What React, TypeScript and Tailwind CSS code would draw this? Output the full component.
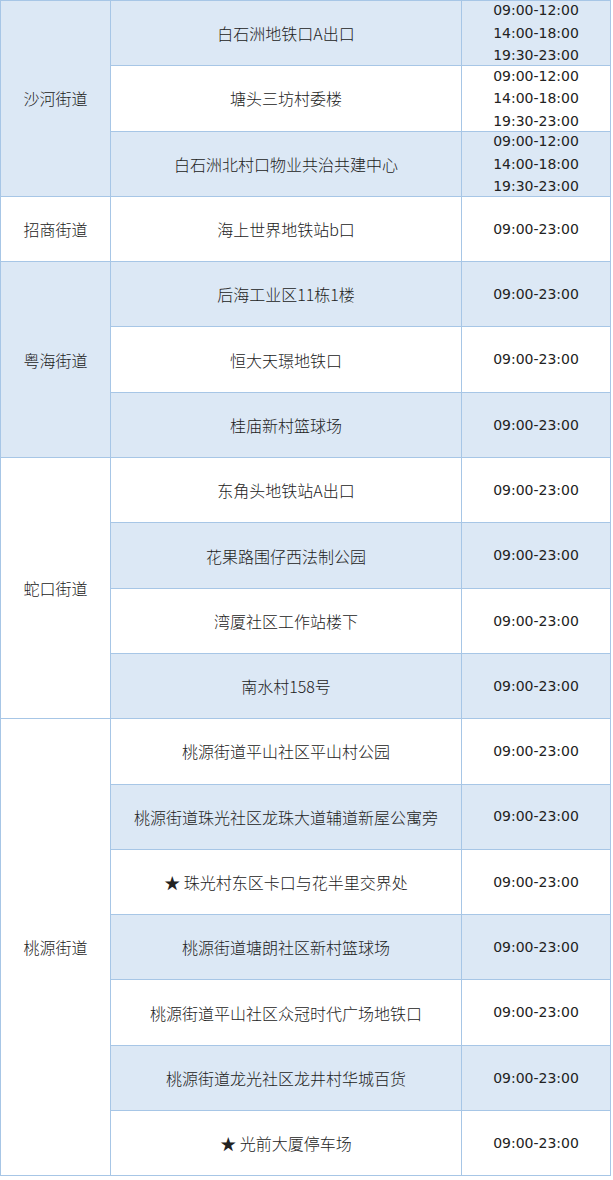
import React from "react";

type Row = { loc: string; time: string[] };
type Section = { name: string; rows: Row[] };

const single = ["09:00-23:00"];
const triple = ["09:00-12:00", "14:00-18:00", "19:30-23:00"];

const sections: Section[] = [
  {
    name: "沙河街道",
    rows: [
      { loc: "白石洲地铁口A出口", time: triple },
      { loc: "塘头三坊村委楼", time: triple },
      { loc: "白石洲北村口物业共治共建中心", time: triple },
    ],
  },
  { name: "招商街道", rows: [{ loc: "海上世界地铁站b口", time: single }] },
  {
    name: "粤海街道",
    rows: [
      { loc: "后海工业区11栋1楼", time: single },
      { loc: "恒大天璟地铁口", time: single },
      { loc: "桂庙新村篮球场", time: single },
    ],
  },
  {
    name: "蛇口街道",
    rows: [
      { loc: "东角头地铁站A出口", time: single },
      { loc: "花果路围仔西法制公园", time: single },
      { loc: "湾厦社区工作站楼下", time: single },
      { loc: "南水村158号", time: single },
    ],
  },
  {
    name: "桃源街道",
    rows: [
      { loc: "桃源街道平山社区平山村公园", time: single },
      { loc: "桃源街道珠光社区龙珠大道辅道新屋公寓旁", time: single },
      { loc: "★ 珠光村东区卡口与花半里交界处", time: single },
      { loc: "桃源街道塘朗社区新村篮球场", time: single },
      { loc: "桃源街道平山社区众冠时代广场地铁口", time: single },
      { loc: "桃源街道龙光社区龙井村华城百货", time: single },
      { loc: "★ 光前大厦停车场", time: single },
    ],
  },
];

export default function App() {
  let idx = 0;
  return (
    <div className="w-[613px] h-[1180px] bg-white">
      <div
        className="w-[611px] border border-[#a7c6e6] text-[#222]"
        style={{ fontFamily: '"Noto Sans CJK SC", "DejaVu Sans", sans-serif' }}
      >
        {sections.map((s, si) => {
          const startIdx = idx;
          const rows = s.rows.map((r) => {
            const i = idx++;
            return { ...r, i };
          });
          const secBlue = startIdx % 2 === 0;
          return (
            <div
              key={s.name}
              className={`flex ${si > 0 ? "border-t border-[#a7c6e6]" : ""}`}
            >
              <div
                className={`w-[110px] shrink-0 border-r border-[#a7c6e6] flex items-center justify-center text-[16px] font-light ${
                  secBlue ? "bg-[#dce8f5]" : "bg-white"
                }`}
              >
                {s.name}
              </div>
              <div className="flex-1 flex flex-col">
                {rows.map((r, ri) => (
                  <div
                    key={r.loc}
                    className={`flex ${ri > 0 ? "h-[65.3px] border-t border-[#a7c6e6]" : "h-[64.3px]"} ${
                      r.i % 2 === 0 ? "bg-[#dce8f5]" : "bg-white"
                    }`}
                  >
                    <div className="w-[351px] shrink-0 border-r border-[#a7c6e6] flex items-center justify-center text-[16px] font-light">
                      {r.loc}
                    </div>
                    <div
                      className="flex-1 flex flex-col items-center justify-center text-[14px] leading-[22.5px]"
                      style={{ fontFamily: '"DejaVu Sans", sans-serif' }}
                    >
                      {r.time.map((t) => (
                        <div key={t}>{t}</div>
                      ))}
                    </div>
                  </div>
                ))}
              </div>
            </div>
          );
        })}
      </div>
    </div>
  );
}
